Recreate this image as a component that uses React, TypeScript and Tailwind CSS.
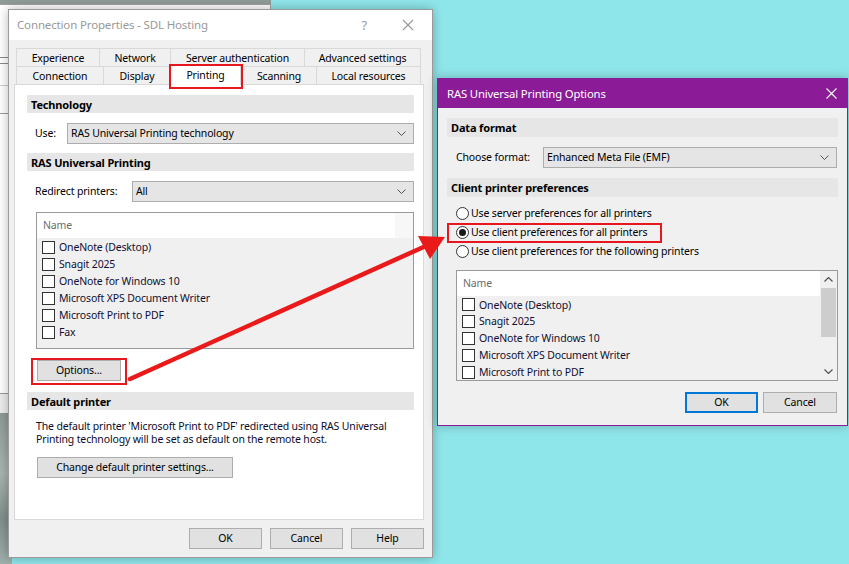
import React from "react";

function Chevron() {
  return (
    <svg width="9" height="5" viewBox="0 0 9 5" className="shrink-0">
      <polyline points="0.5,0.5 4.5,4.5 8.5,0.5" fill="none" stroke="#555" strokeWidth="1" />
    </svg>
  );
}

function Select({ className, text }: { className: string; text: string }) {
  return (
    <div className={"h-[21px] bg-[#e5e5e5] border border-[#adadad] flex items-center justify-between pl-[3px] pr-[7px] " + className}>
      <span>{text}</span>
      <Chevron />
    </div>
  );
}

function Band({ children, className }: { children: React.ReactNode; className: string }) {
  return (
    <div className={"bg-[#e6e6e6] flex items-center pl-[4px] font-bold text-[11px] text-black " + className}>{children}</div>
  );
}

function Check({ label }: { label: string }) {
  return (
    <div className="h-[17px] flex items-center pl-[5px] pt-[1px]">
      <span className="w-[13px] h-[13px] border border-[#333] bg-white shrink-0" />
      <span className="ml-[4px] text-[#111133]">{label}</span>
    </div>
  );
}

function Btn({ className, children }: { className: string; children: React.ReactNode }) {
  return (
    <div className={"h-[21px] bg-[#e1e1e1] border border-[#adadad] flex items-center justify-center " + className}>{children}</div>
  );
}

function Radio({ label, checked }: { label: string; checked?: boolean }) {
  return (
    <div className="h-[19px] flex items-center">
      <span className="w-[13px] h-[13px] rounded-full border border-[#333] bg-white flex items-center justify-center shrink-0">
        {checked && <span className="w-[7px] h-[7px] rounded-full bg-[#1a1a1a]" />}
      </span>
      <span className="ml-[2px]">{label}</span>
    </div>
  );
}

const printers = ["OneNote (Desktop)", "Snagit 2025", "OneNote for Windows 10", "Microsoft XPS Document Writer", "Microsoft Print to PDF", "Fax"];

function Tab({ className, children }: { className: string; children: React.ReactNode }) {
  return (
    <div className={"h-[18px] border-l border-t border-[#d9d9d9] bg-[#f0f0f0] flex items-center justify-center pt-[2px] " + className}>{children}</div>
  );
}

export default function App() {
  return (
    <div className="relative w-[849px] h-[564px] overflow-hidden bg-[#8fe6ea] font-['Noto_Sans',sans-serif] text-[10.5px] tracking-[-0.15px] text-black leading-none">
      {/* desktop behind */}
      <div className="absolute left-0 top-0 w-[271px] h-[5px] bg-[#8e9b97]" />
      <div className="absolute left-0 top-[4px] w-[271px] h-[410px] bg-white border-t border-r border-[#a0a0a0]">
        <div className="absolute left-0 top-[52px] w-[10px] h-[1px] bg-[#888]" />
        <div className="absolute left-0 top-[58px] w-[10px] h-[1px] bg-[#888]" />
        <div className="absolute left-0 top-[80px] w-[10px] h-[1px] bg-[#ccc]" />
        <div className="absolute left-0 top-[108px] w-[10px] h-[1px] bg-[#999]" />
        <div className="absolute left-0 top-[388px] w-[10px] h-[21px] bg-[#ececec] border-t border-[#999]" />
      </div>
      <div className="absolute left-0 top-[413px] w-[12px] h-[151px] bg-[linear-gradient(180deg,#8d9a96,#a9b5b1_40%,#7f8f8b_70%,#9fb0ac)]" />

      {/* main dialog */}
      <div className="absolute left-[8px] top-[9px] w-[425px] h-[549px] border border-[#9a9a9a] bg-[#f0f0f0] flex flex-col shadow-[0_0_10px_rgba(0,0,0,0.28)]">
        <div className="h-[30px] bg-white flex items-center pl-[8px] pr-[18px] shrink-0">
          <span className="text-[11.5px] text-[#999]">Connection Properties - SDL Hosting</span>
          <span className="ml-auto mr-[35px] text-[13px] text-[#999]">?</span>
          <svg width="12" height="12" viewBox="0 0 12 12">
            <path d="M1 1 L11 11 M11 1 L1 11" stroke="#999" strokeWidth="1.1" />
          </svg>
        </div>
        <div className="flex flex-col pt-[8px] pl-[5px] pr-[8px] flex-1">
          <div className="ml-[2px] w-[405px] flex">
            <Tab className="w-[83px]">Experience</Tab>
            <Tab className="w-[71px]">Network</Tab>
            <Tab className="w-[134px]">Server authentication</Tab>
            <Tab className="w-[117px] border-r">Advanced settings</Tab>
          </div>
          <div className="ml-[2px] w-[405px] flex items-end h-[18px]">
            <Tab className="w-[87px]">Connection</Tab>
            <Tab className="w-[67px]">Display</Tab>
            <div className="relative z-10 w-[71px] h-[21px] -mb-[1px] bg-white border-l border-t border-r border-[#d9d9d9] flex justify-center pt-[5px]">Printing</div>
            <Tab className="w-[75px]">Scanning</Tab>
            <Tab className="w-[105px] border-r">Local resources</Tab>
          </div>
          <div className="w-[410px] h-[436px] bg-white border border-[#d9d9d9] flex flex-col">
            <Band className="mt-[10px] ml-[12px] w-[387px] h-[18px]">Technology</Band>
            <div className="mt-[10px] ml-[20px] flex items-center">
              <span className="w-[32px]">Use:</span>
              <Select className="w-[347px]" text="RAS Universal Printing technology" />
            </div>
            <Band className="mt-[9px] ml-[12px] w-[387px] h-[18px]">RAS Universal Printing</Band>
            <div className="mt-[10px] ml-[20px] flex items-center">
              <span className="w-[97px]">Redirect printers:</span>
              <Select className="w-[282px]" text="All" />
            </div>
            <div className="mt-[10px] ml-[21px] w-[378px] h-[137px] border border-[#9a9a9a] bg-[#f0f0f0] flex flex-col">
              <div className="h-[25px] flex shrink-0">
                <div className="w-[358px] bg-white flex items-center pl-[6px] text-[#6d6d6d]">Name</div>
                <div className="flex-1 bg-[#f7f7f7]" />
              </div>
              {printers.map((p) => (
                <Check key={p} label={p} />
              ))}
            </div>
            <Btn className="mt-[11px] ml-[22px] w-[84px]">Options...</Btn>
            <Band className="mt-[11px] ml-[12px] w-[387px] h-[18px]">Default printer</Band>
            <div className="mt-[10px] ml-[21px] leading-[13px] text-[#0c0c2a]">
              The default printer 'Microsoft Print to PDF' redirected using RAS Universal
              <br />
              Printing technology will be set as default on the remote host.
            </div>
            <Btn className="mt-[11px] ml-[22px] w-[196px]">Change default printer settings...</Btn>
          </div>
          <div className="mt-[8px] flex justify-end gap-[8px]">
            <Btn className="w-[73px]">OK</Btn>
            <Btn className="w-[73px]">Cancel</Btn>
            <Btn className="w-[73px]">Help</Btn>
          </div>
        </div>
      </div>

      {/* right dialog */}
      <div className="absolute left-[437px] top-[78px] w-[411px] h-[348px] border border-[#8c1b98] bg-[#f0f0f0] flex flex-col shadow-[0_0_10px_rgba(0,0,0,0.25)]">
        <div className="h-[29px] bg-[#8c1b98] flex items-center pl-[9px] pr-[10px] shrink-0">
          <span className="text-white text-[11.3px]">RAS Universal Printing Options</span>
          <svg width="11" height="11" viewBox="0 0 11 11" className="ml-auto">
            <path d="M0.5 0.5 L10.5 10.5 M10.5 0.5 L0.5 10.5" stroke="#fff" strokeWidth="1.1" />
          </svg>
        </div>
        <Band className="mt-[10px] ml-[9px] w-[391px] h-[19px]">Data format</Band>
        <div className="mt-[10px] ml-[18px] flex items-center">
          <span className="w-[87px]">Choose format:</span>
          <Select className="w-[294px]" text="Enhanced Meta File (EMF)" />
        </div>
        <Band className="mt-[10px] ml-[9px] w-[391px] h-[19px]">Client printer preferences</Band>
        <div className="mt-[7px] ml-[18px] flex flex-col">
          <Radio label="Use server preferences for all printers" />
          <Radio label="Use client preferences for all printers" checked />
          <Radio label="Use client preferences for the following printers" />
        </div>
        <div className="mt-[9px] ml-[18px] w-[382px] h-[111px] border border-[#9a9a9a] bg-[#f0f0f0] flex overflow-hidden">
          <div className="flex-1 flex flex-col">
            <div className="h-[25px] bg-white flex items-center pl-[6px] text-[#6d6d6d] shrink-0">Name</div>
            {printers.slice(0, 5).map((p) => (
              <Check key={p} label={p} />
            ))}
          </div>
          <div className="w-[17px] flex flex-col items-center bg-[#f0f0f0]">
            <div className="h-[17px] flex items-center justify-center">
              <svg width="9" height="5" viewBox="0 0 9 5"><polyline points="0.5,4.5 4.5,0.5 8.5,4.5" fill="none" stroke="#555" strokeWidth="1.2" /></svg>
            </div>
            <div className="w-[15px] h-[49px] bg-[#cdcdcd]" />
            <div className="flex-1" />
            <div className="h-[17px] flex items-center justify-center">
              <svg width="9" height="5" viewBox="0 0 9 5"><polyline points="0.5,0.5 4.5,4.5 8.5,0.5" fill="none" stroke="#555" strokeWidth="1.2" /></svg>
            </div>
          </div>
        </div>
        <div className="mt-[11px] flex justify-end gap-[5px] pr-[10px]">
          <div className="w-[73px] h-[21px] bg-[#e1e1e1] border-2 border-[#0078d7] flex items-center justify-center">OK</div>
          <Btn className="w-[74px]">Cancel</Btn>
        </div>
      </div>

      {/* annotations */}
      <div className="absolute left-[169px] top-[64px] w-[74px] h-[25px] border-2 border-[#e8171f] z-20" />
      <div className="absolute left-[31px] top-[358px] w-[96px] h-[27px] border-2 border-[#e8171f] z-20" />
      <div className="absolute left-[447px] top-[223px] w-[215px] h-[20px] border-2 border-[#e8171f] z-20" />
      <svg className="absolute left-0 top-0 z-30 pointer-events-none" width="849" height="564" viewBox="0 0 849 564">
        <line x1="130" y1="379" x2="428" y2="245" stroke="#ea1a1a" strokeWidth="4.5" strokeLinecap="round" />
        <polygon points="445,237 418,236 430,259" fill="#ea1a1a" />
      </svg>
    </div>
  );
}
